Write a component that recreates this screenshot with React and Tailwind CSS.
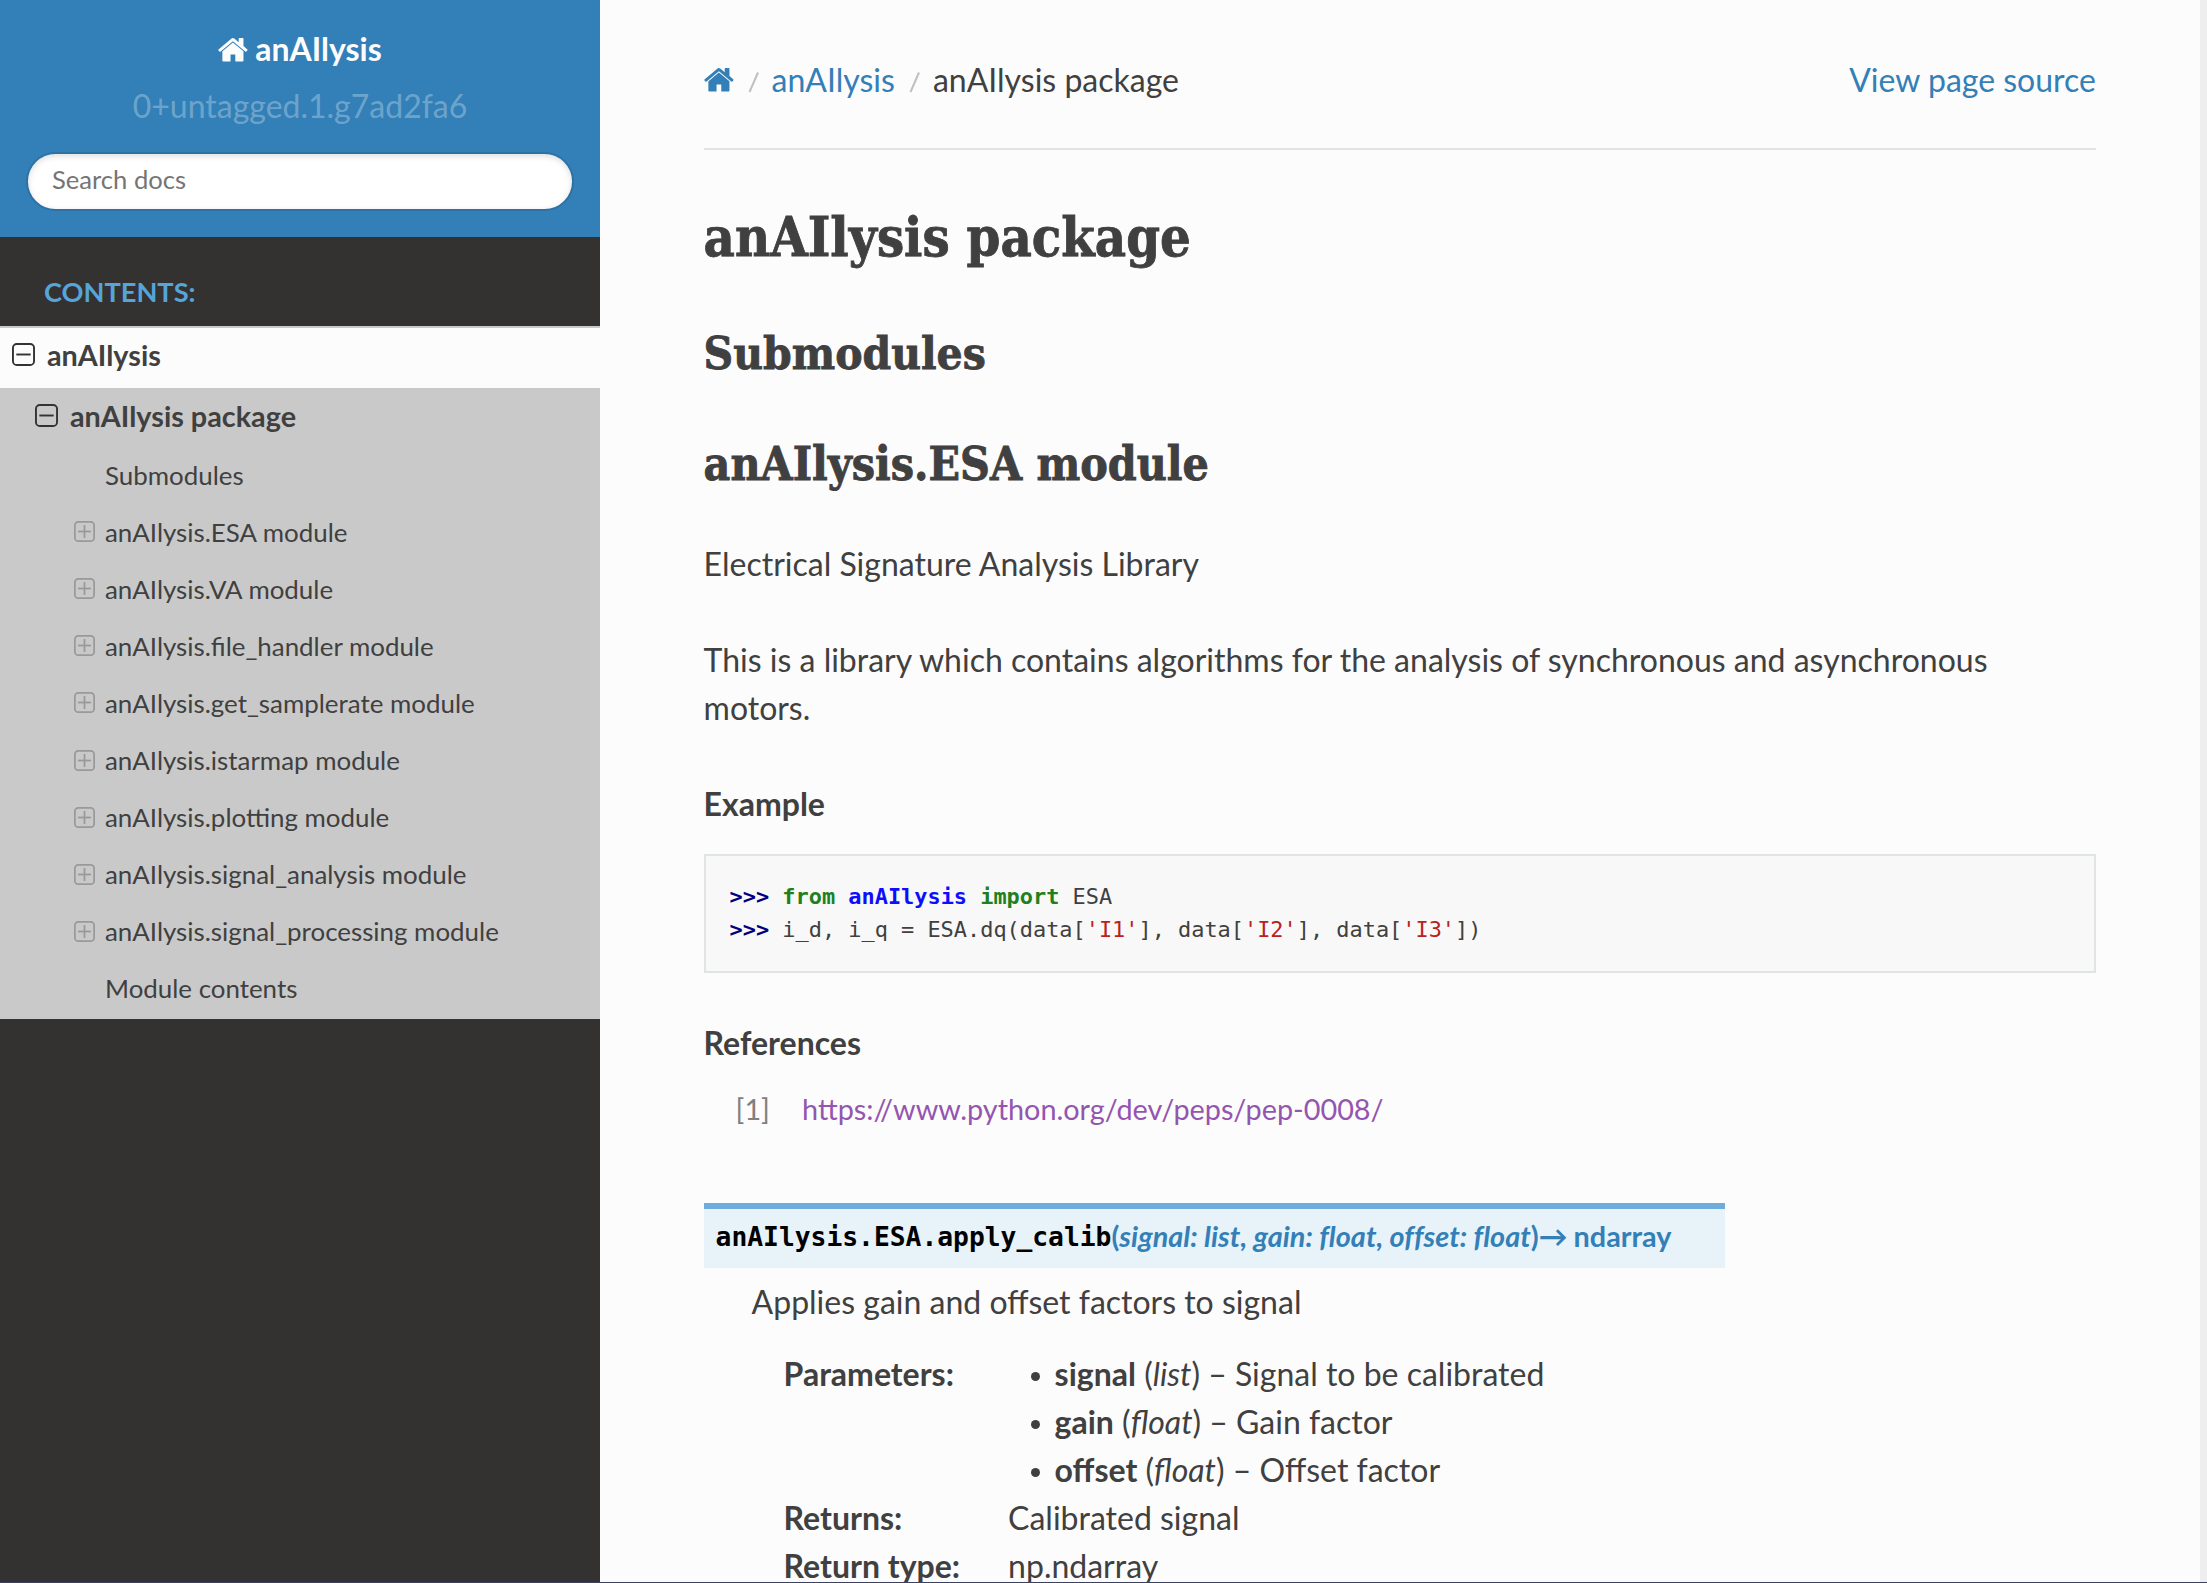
import React from "react";

const Home = ({ className }) => (
  <svg viewBox="0 0 30 24" className={className} fill="currentColor" aria-hidden="true">
    <path d="M25.6 14v8.6c0 .6-.5 1.1-1.1 1.1h-6.8v-6.9h-4.6v6.9H6.300c-.6 0-1.100-.5-1.100-1.100V14l.1-.3L15.400 5.300l10.200 8.400v.3z" />
    <path d="M29.500 12.700l-1.100 1.300a.6.6 0 0 1-.8.1L15.400 3.900 3.200 14.100a.6.6 0 0 1-.8-.1l-1.100-1.300a.6.6 0 0 1 .1-.8L14.100 1.300a2.200 2.200 0 0 1 2.600 0L21 4.900V1.500c0-.3.3-.6.6-.6H25c.3 0 .6.300.6.6v7.200l3.900 3.200c.2.2.3.6 0 .8z" />
  </svg>
);

const Toggle = ({ open, className }) => (
  <svg viewBox="0 0 24 24" className={className} fill="none" stroke="currentColor" strokeWidth="2" aria-hidden="true">
    <rect x="1" y="1" width="22" height="22" rx="4" />
    <path d="M4.500 12h15" />
    {!open && <path d="M12 4.500v15" />}
  </svg>
);

const Slash = () => (
  <svg viewBox="0 0 38 48" className="h-[48px] w-[38px]" stroke="#c0c0c0" strokeWidth="2" aria-hidden="true">
    <path d="M15.500 36L24 16.500" />
  </svg>
);

const modules = [
  ["Submodules", false],
  ["anAIlysis.ESA module", true],
  ["anAIlysis.VA module", true],
  ["anAIlysis.file_handler module", true],
  ["anAIlysis.get_samplerate module", true],
  ["anAIlysis.istarmap module", true],
  ["anAIlysis.plotting module", true],
  ["anAIlysis.signal_analysis module", true],
  ["anAIlysis.signal_processing module", true],
  ["Module contents", false],
];

const params = [
  ["signal", "list", "Signal to be calibrated"],
  ["gain", "float", "Gain factor"],
  ["offset", "float", "Offset factor"],
];

function Sidebar() {
  return (
    <nav className="w-[600px] shrink-0 bg-[#343131]">
      <div className="flex h-[237px] flex-col items-center bg-[#337fb7] px-[26px] pt-[25px]">
        <a className="flex h-[48px] items-center gap-[7px] pr-px font-bold text-[#fcfcfc]">
          <Home className="h-[25px] w-[31px]" />
          anAIlysis
        </a>
        <div className="mt-[9px] h-[48px] leading-[48px] text-white/30">0+untagged.1.g7ad2fa6</div>
        <input
          className="mt-[22px] h-[59px] w-full rounded-[50px] border-2 border-[#2e71a3] bg-white px-6 pb-[5px] text-[25.6px] shadow-[inset_0_2px_6px_#ddd] placeholder:text-[#757575]"
          placeholder="Search docs"
        />
      </div>
      <p className="mt-[25px] h-[64px] pl-[44px] text-[27.2px] leading-[60px] font-bold text-[#55a5d9] uppercase">Contents:</p>
      <ul>
        <li>
          <a className="flex h-[62px] items-center gap-[12px] border-t-2 border-[#c9c9c9] bg-[#fcfcfc] pb-[7px] pl-[12px] text-[28.8px] font-bold">
            <Toggle open className="h-[23px] w-[23px] text-[#333]" />
            anAIlysis
          </a>
          <ul className="h-[631px] bg-[#c9c9c9]">
            <li>
              <a className="flex h-[58px] items-center gap-[12px] pb-[3px] pl-[35px] text-[28.8px] font-bold">
                <Toggle open className="h-[23px] w-[23px] text-[#333]" />
                anAIlysis package
              </a>
              <ul>
                {modules.map(([name, more]) => (
                  <li key={name} className="flex h-[57.1px] items-center pl-[74px] text-[25.9px]">
                    <span className="w-[31px]">{more && <Toggle className="h-[21px] w-[21px] text-[#999]" />}</span>
                    {name}
                  </li>
                ))}
              </ul>
            </li>
          </ul>
        </li>
      </ul>
    </nav>
  );
}

function Content() {
  return (
    <main className="w-[1600px] shrink-0 overflow-hidden bg-[#fcfcfc] pt-[56px] pr-[104px] pl-[103.6px]">
      <div className="flex h-[48px] items-center text-[#337fb7]">
        <Home className="mb-0.5 -ml-px h-[25px] w-[31px]" />
        <Slash />
        <a>anAIlysis</a>
        <Slash />
        <span className="text-[#404040]">anAIlysis package</span>
        <a className="ml-auto">View page source</a>
      </div>
      <hr className="mt-[44px] border-t-2 border-[#e1e4e5]" />
      <div className="font-['Roboto_Slab','DejaVu_Serif_Condensed','DejaVu_Serif',serif] font-bold whitespace-nowrap [-webkit-text-stroke:0.8px_#404040]">
        <h1 className="mt-[47px] h-[80px] text-[53.8px] leading-[80px]">anAIlysis package</h1>
        <h2 className="mt-[41px] h-[70px] text-[45.6px] leading-[70px]">Submodules</h2>
        <h2 className="mt-[41px] h-[70px] text-[46px] leading-[70px]">anAIlysis.ESA module</h2>
      </div>
      <p className="mt-[40.6px]">Electrical Signature Analysis Library</p>
      <p className="mt-[48px]">
        This is a library which contains algorithms for the analysis of synchronous and asynchronous motors.
      </p>
      <p className="mt-[48px] font-bold">Example</p>
      <pre className="mt-[26px] h-[119.2px] border-2 border-[#e1e4e5] bg-[#f8f8f8] p-6 font-['Consolas','DejaVu_Sans_Mono',monospace] text-[21.92px] leading-[33.6px]">
        <b className="text-[#000080]">&gt;&gt;&gt; </b>
        <b className="text-[#208020]">from</b> <b className="text-[#0e0eff]">anAIlysis</b> <b className="text-[#208020]">import</b> ESA{"\n"}
        <b className="text-[#000080]">&gt;&gt;&gt; </b>i_d, i_q = ESA.dq(data[<span className="text-[#ba2121]">'I1'</span>], data[<span className="text-[#ba2121]">'I2'</span>], data[<span className="text-[#ba2121]">'I3'</span>])
      </pre>
      <p className="mt-[46px] font-bold">References</p>
      <div className="mt-[18px] flex h-[48px] text-[28.8px]">
        <span className="w-[98.500px] pl-[32px] text-[#808080]">[1]</span>
        <a className="text-[#9455b0]">https://www.python.org/dev/peps/pep-0008/</a>
      </div>
      <div className="mt-[70px] flex h-[65px] w-[1021px] border-t-[6px] border-[#6eaddb] bg-[#e7f2f9] pl-[12px] text-[28.8px] leading-[54px] font-bold whitespace-nowrap text-[#337fb7]">
        <code className="pt-px font-['Consolas','DejaVu_Sans_Mono',monospace] text-[26.3px] text-black">anAIlysis.ESA.apply_calib</code>
        <span className="tracking-[0.04px]">(<em>signal: list, gain: float, offset: float</em>)</span>
        <span className="mr-[6px]">→</span>
        <span>ndarray</span>
      </div>
      <p className="mt-[10px] pl-[48px]">Applies gain and offset factors to signal</p>
      <dl className="mt-[24px] grid grid-cols-[224.500px_1fr] pl-[80px]">
        <dt className="font-bold">Parameters:</dt>
        <dd>
          <ul className="pl-[23px]">
            {params.map(([n, t, d]) => (
              <li key={n} className="flex items-center">
                <span className="mt-[6px] mr-[14.500px] size-[9px] rounded-full bg-[#404040]" />
                <span><b>{n}</b> (<em>{t}</em>) – {d}</span>
              </li>
            ))}
          </ul>
        </dd>
        <dt className="font-bold">Returns:</dt>
        <dd>Calibrated signal</dd>
        <dt className="font-bold">Return type:</dt>
        <dd>np.ndarray</dd>
      </dl>
    </main>
  );
}

export default function App() {
  return (
    <div className="relative flex h-[1583px] w-[2207px] overflow-hidden bg-[#eeeeee] font-[Lato,sans-serif] text-[32px] leading-[48px] text-[#404040]">
      <Sidebar />
      <Content />
      <div className="absolute inset-x-0 bottom-0 h-px bg-[#3c4160]" />
    </div>
  );
}
